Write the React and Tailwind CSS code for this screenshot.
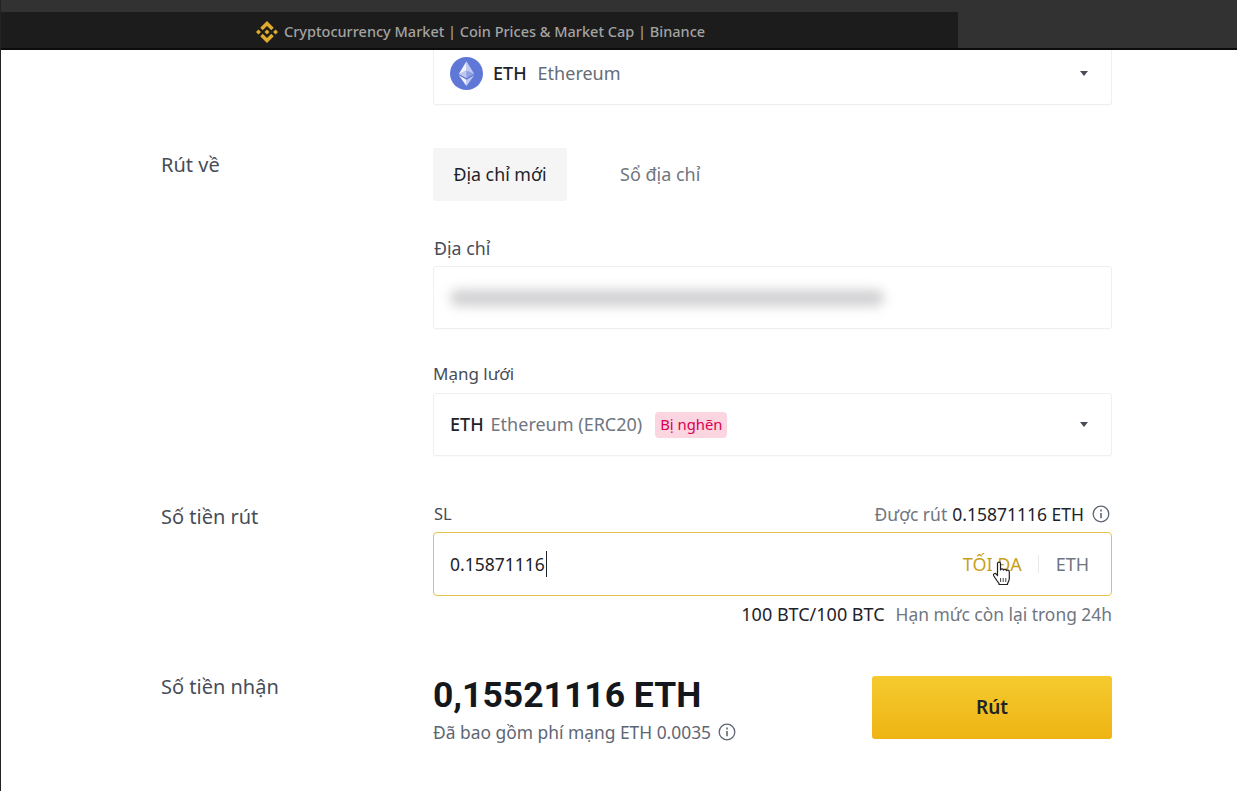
const font = { fontFamily: '"Noto Sans", Inter, sans-serif' };

function InfoIcon() {
  return (
    <svg width="18" height="18" viewBox="0 0 18 18" fill="none" stroke="#5e6673" strokeWidth="1.3" className="shrink-0">
      <circle cx="9" cy="9" r="7.8" />
      <path d="M9 8v5.2" strokeWidth="1.6" />
      <path d="M9 4.6v1.8" strokeWidth="1.6" />
    </svg>
  );
}

function Caret() {
  return (
    <svg width="10" height="7" viewBox="0 0 10 7" className="shrink-0">
      <path d="M1 1h8L5 6z" fill="#474d57" />
    </svg>
  );
}

function BinanceLogo() {
  return (
    <svg width="22" height="22" viewBox="0 0 126.6 126.6" fill="#e0aa2c" className="shrink-0">
      <path d="M38.73 53.2l24.59-24.58 24.6 24.6 14.3-14.31L63.32 0l-38.9 38.9zM0 63.31l14.3-14.31 14.31 14.31-14.31 14.3zM38.73 73.41l24.59 24.59 24.6-24.6 14.31 14.29-38.9 38.91-38.91-38.88v-.03zM98.28 63.31l14.3-14.31 14.31 14.3-14.31 14.32z" />
      <path d="M77.83 63.3L63.32 48.78 52.59 59.51l-1.24 1.23-2.54 2.54 14.51 14.5 14.51-14.47z" />
    </svg>
  );
}

function EthIcon() {
  return (
    <svg width="33" height="33" viewBox="0 0 32 32" className="shrink-0">
      <circle cx="16" cy="16" r="16" fill="#5f78d8" />
      <path d="M16 4v9l7.5 3.4z" fill="#fff" fillOpacity=".6" />
      <path d="M16 4L8.5 16.4 16 13z" fill="#fff" fillOpacity=".9" />
      <path d="M16 22.1v5.9l7.5-10.4z" fill="#fff" fillOpacity=".6" />
      <path d="M16 28v-5.9l-7.5-4.5z" fill="#fff" fillOpacity=".9" />
      <path d="M16 20.7l7.5-4.3L16 13z" fill="#fff" fillOpacity=".3" />
      <path d="M8.5 16.4l7.5 4.3V13z" fill="#fff" fillOpacity=".6" />
    </svg>
  );
}

function HandCursor() {
  return (
    <svg width="20" height="26" viewBox="0 0 20 26" className="absolute left-[991px] top-[561px]">
      <path
        d="M5.5 2.5c0-1.8 3-1.8 3 0V9c.2-1.6 3-1.6 3 .2.3-1.4 2.9-1.2 3 .5.4-1 2.8-.8 2.8 1v6.5c0 2.5-1 4-1.8 5.3v1H7v-1.2C5 20 3.5 17.8 1.7 14.8c-1-1.8 1.3-3.2 2.6-1.6l1.2 1.5z"
        fill="#fff"
        stroke="#222"
        strokeWidth="1.2"
        strokeLinejoin="round"
      />
      <path d="M8.6 17v4M11.2 17v4M13.8 17v4" stroke="#444" strokeWidth="1" />
    </svg>
  );
}

function Row({ label, children, className = "", labelClass = "" }) {
  return (
    <div className={`flex ${className}`}>
      <div className={`w-[272px] shrink-0 text-[20px] leading-[24px] text-[#474d57] ${labelClass}`}>{label}</div>
      <div className="w-[679px] shrink-0">{children}</div>
    </div>
  );
}

function Box({ children, className = "" }) {
  return (
    <div className={`flex items-center rounded-[3px] border border-[#eeeff1] bg-white shadow-[0_1px_1px_rgba(0,0,0,0.02)] ${className}`}>
      {children}
    </div>
  );
}

export default function App() {
  return (
    <div style={font} className="relative h-[791px] w-[1237px] overflow-hidden border-l border-[#222] bg-white">
      <header className="flex h-[50px] flex-col border-b-[2px] border-b-[#0c0c0c] bg-[#323232]">
        <div className="mt-[12px] flex h-[36px] w-[957px] items-center gap-[6px] bg-[#1c1c1c] pl-[255px] pt-[3px]">
          <BinanceLogo />
          <span className="text-[14.5px] font-medium text-[#a3a3a3]">Cryptocurrency Market | Coin Prices &amp; Market Cap | Binance</span>
        </div>
      </header>

      <main className="pl-[160px]">
        <div className="ml-[272px] w-[679px]">
          <Box className="h-[55px] rounded-t-none border-t-0 pb-[8px] pl-[16px] pr-[22px]">
            <EthIcon />
            <span className="ml-[10px] text-[18px] font-medium text-[#1e2329]">ETH</span>
            <span className="ml-[11px] text-[18px] text-[#666c76]">Ethereum</span>
            <span className="ml-auto flex"><Caret /></span>
          </Box>
        </div>

        <Row label="Rút về" className="mt-[43px]" labelClass="pt-[5px]">
          <div className="flex items-center">
            <div className="flex h-[53px] w-[134px] items-center justify-center rounded-[3px] bg-[#f5f5f5] text-[17.8px] text-[#1e2329]">Địa chỉ mới</div>
            <div className="ml-[53px] text-[18px] text-[#707680]">Sổ địa chỉ</div>
          </div>

          <div className="mt-[35px] h-[24px] pl-px text-[17.8px] leading-[24px] text-[#474d57]">Địa chỉ</div>
          <Box className="mt-[6px] h-[63px] pl-[16px]">
            <div className="h-[16px] w-[434px] rounded-full bg-[#cfcfd1] blur-[6px]" />
          </Box>

          <div className="mt-[33px] h-[24px] text-[17px] leading-[24px] text-[#474d57]">Mạng lưới</div>
          <Box className="mt-[7px] h-[63px] pl-[16px] pr-[22px]">
            <span className="text-[18px] font-medium text-[#1e2329]">ETH</span>
            <span className="ml-[7px] text-[18px] text-[#707680]">Ethereum (ERC20)</span>
            <span className="ml-[13px] flex h-[26px] items-center rounded-[4px] bg-[#fbd5e0] px-[5px] text-[14.8px] text-[#d9004f]">Bị nghẽn</span>
            <span className="ml-auto flex"><Caret /></span>
          </Box>
        </Row>

        <Row label="Số tiền rút" className="mt-[46px]" labelClass="pt-[3px]">
          <div className="flex h-[24px] items-center justify-between">
            <span className="pl-px text-[16.5px] text-[#474d57]">SL</span>
            <span className="flex items-center text-[17.5px]">
              <span className="text-[#707680]">Được rút</span>
              <span className="ml-[5px] text-[#1e2329]">0.15871116 ETH</span>
              <span className="ml-[8px] mr-[2px] flex"><InfoIcon /></span>
            </span>
          </div>
          <div className="mt-[6px] flex h-[64px] items-center rounded-[4px] border-[1.5px] border-[#e4c44c] pl-[16px] pr-[22px]">
            <span className="border-r border-[#1e2329] pr-px text-[17.5px] text-[#1e2329]">0.15871116</span>
            <span className="ml-auto text-[18px] text-[#c99f1e]">TỐI ĐA</span>
            <span className="ml-[16px] h-[18px] w-px bg-[#e8e8e8]" />
            <span className="ml-[17px] text-[18px] text-[#707680]">ETH</span>
          </div>
          <div className="mt-[6px] flex h-[24px] items-center justify-end">
            <span className="text-[18px] text-[#1e2329]">100 BTC/100 BTC</span>
            <span className="ml-[11px] text-[17.4px] text-[#707680]">Hạn mức còn lại trong 24h</span>
          </div>
        </Row>

        <Row label="Số tiền nhận" className="mt-[50px]" labelClass="-mt-[1px]">
          <div className="flex items-start justify-between">
            <div>
              <div style={{ fontFamily: 'Roboto, sans-serif' }} className="text-[35.5px] font-bold leading-[38px] text-[#14171b]">0,15521116 ETH</div>
              <div className="mt-[7px] flex items-center text-[17.4px] leading-[22px] text-[#5e6673]">
                <span>Đã bao gồm phí mạng ETH 0.0035</span>
                <span className="ml-[7px] flex"><InfoIcon /></span>
              </div>
            </div>
            <button className="flex h-[63px] w-[240px] items-center justify-center rounded-[3px] bg-gradient-to-b from-[#f5ca2e] to-[#eeb411] text-[19px] font-semibold text-[#1e2329]">Rút</button>
          </div>
        </Row>
      </main>

      <HandCursor />
    </div>
  );
}
